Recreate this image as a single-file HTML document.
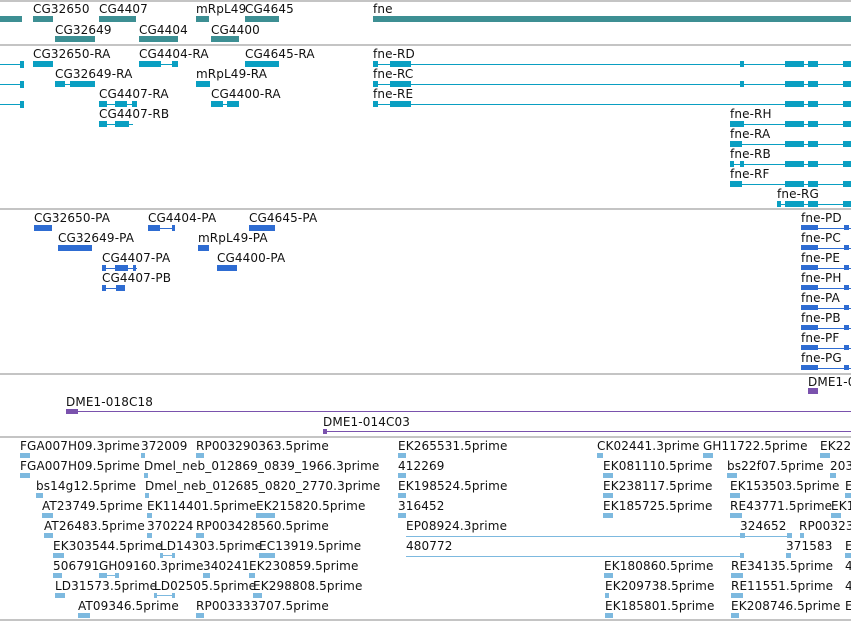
<!DOCTYPE html>
<html><head><meta charset="utf-8"><style>
body{margin:0;width:851px;height:621px;overflow:hidden;background:#fff;position:relative}
.t{position:absolute;font:12px "DejaVu Sans","Liberation Sans",sans-serif;line-height:12px;white-space:nowrap;color:#111;letter-spacing:0.12px;margin-top:1px}
.b{position:absolute}
.hr{position:absolute;left:0;width:851px;height:2px;background:#c4c4c4}
.g{background:#3d8f93;height:6px}
.r{background:#0a9fc2}
.p{background:#2e6cd2}
.u{background:#7a52ad}
.e{background:#7db9df}
</style></head><body>
<div class="hr" style="top:0"></div>
<div class="hr" style="top:44px"></div>
<div class="hr" style="top:208px"></div>
<div class="hr" style="top:373px"></div>
<div class="hr" style="top:436px"></div>
<div class="hr" style="top:619px"></div>

<div class="t" style="left:33px;top:2px">CG32650</div>
<div class="t" style="left:99px;top:2px">CG4407</div>
<div class="t" style="left:196px;top:2px">mRpL49</div>
<div class="t" style="left:245px;top:2px">CG4645</div>
<div class="t" style="left:373px;top:2px">fne</div>
<div class="t" style="left:55px;top:23px">CG32649</div>
<div class="t" style="left:139px;top:23px">CG4404</div>
<div class="t" style="left:211px;top:23px">CG4400</div>
<div class="b g" style="left:0;top:16px;width:22px"></div>
<div class="b g" style="left:33px;top:16px;width:20px"></div>
<div class="b g" style="left:99px;top:16px;width:37px"></div>
<div class="b g" style="left:196px;top:16px;width:13px"></div>
<div class="b g" style="left:245px;top:16px;width:34px"></div>
<div class="b g" style="left:373px;top:16px;width:478px"></div>
<div class="b g" style="left:55px;top:36px;width:40px"></div>
<div class="b g" style="left:139px;top:36px;width:39px"></div>
<div class="b g" style="left:211px;top:36px;width:28px"></div>

<div class="t" style="left:33px;top:47px">CG32650-RA</div>
<div class="t" style="left:139px;top:47px">CG4404-RA</div>
<div class="t" style="left:245px;top:47px">CG4645-RA</div>
<div class="t" style="left:373px;top:47px">fne-RD</div>
<div class="t" style="left:55px;top:67px">CG32649-RA</div>
<div class="t" style="left:196px;top:67px">mRpL49-RA</div>
<div class="t" style="left:373px;top:67px">fne-RC</div>
<div class="t" style="left:99px;top:87px">CG4407-RA</div>
<div class="t" style="left:211px;top:87px">CG4400-RA</div>
<div class="t" style="left:373px;top:87px">fne-RE</div>
<div class="t" style="left:99px;top:107px">CG4407-RB</div>
<div class="t" style="left:730px;top:107px">fne-RH</div>
<div class="t" style="left:730px;top:127px">fne-RA</div>
<div class="t" style="left:730px;top:147px">fne-RB</div>
<div class="t" style="left:730px;top:167px">fne-RF</div>
<div class="t" style="left:777px;top:187px">fne-RG</div>

<div class="b r" style="left:0;top:64px;width:24px;height:1px"></div><div class="b r" style="left:20px;top:61px;width:4px;height:7px"></div>
<div class="b r" style="left:0;top:84px;width:24px;height:1px"></div><div class="b r" style="left:20px;top:81px;width:4px;height:7px"></div>
<div class="b r" style="left:0;top:104px;width:24px;height:1px"></div><div class="b r" style="left:20px;top:101px;width:4px;height:7px"></div>
<div class="b r" style="left:33px;top:61px;width:20px;height:6px"></div>
<div class="b r" style="left:139px;top:64px;width:39px;height:1px"></div><div class="b r" style="left:139px;top:61px;width:22px;height:6px"></div><div class="b r" style="left:172px;top:61px;width:6px;height:6px"></div>
<div class="b r" style="left:245px;top:61px;width:34px;height:6px"></div>
<div class="b r" style="left:55px;top:84px;width:40px;height:1px"></div><div class="b r" style="left:55px;top:81px;width:10px;height:6px"></div><div class="b r" style="left:70px;top:81px;width:25px;height:6px"></div>
<div class="b r" style="left:196px;top:81px;width:14px;height:6px"></div>
<div class="b r" style="left:99px;top:104px;width:38px;height:1px"></div><div class="b r" style="left:99px;top:101px;width:8px;height:6px"></div><div class="b r" style="left:115px;top:101px;width:12px;height:6px"></div><div class="b r" style="left:132px;top:101px;width:5px;height:6px"></div>
<div class="b r" style="left:211px;top:104px;width:28px;height:1px"></div><div class="b r" style="left:211px;top:101px;width:12px;height:6px"></div><div class="b r" style="left:227px;top:101px;width:12px;height:6px"></div>
<div class="b r" style="left:99px;top:124px;width:34px;height:1px"></div><div class="b r" style="left:99px;top:121px;width:8px;height:6px"></div><div class="b r" style="left:115px;top:121px;width:14px;height:6px"></div>

<div class="b r" style="left:373px;top:64px;width:478px;height:1px"></div>
<div class="b r" style="left:373px;top:84px;width:478px;height:1px"></div>
<div class="b r" style="left:373px;top:104px;width:478px;height:1px"></div>
<div class="b r" style="left:373px;top:61px;width:5px;height:6px"></div><div class="b r" style="left:390px;top:61px;width:21px;height:6px"></div>
<div class="b r" style="left:373px;top:81px;width:5px;height:6px"></div><div class="b r" style="left:390px;top:81px;width:21px;height:6px"></div>
<div class="b r" style="left:373px;top:101px;width:5px;height:6px"></div><div class="b r" style="left:390px;top:101px;width:21px;height:6px"></div>
<div class="b r" style="left:740px;top:61px;width:4px;height:6px"></div>
<div class="b r" style="left:740px;top:81px;width:4px;height:6px"></div>
<div class="b r" style="left:730px;top:124px;width:121px;height:1px"></div><div class="b r" style="left:730px;top:121px;width:14px;height:6px"></div>
<div class="b r" style="left:730px;top:144px;width:121px;height:1px"></div><div class="b r" style="left:730px;top:141px;width:12px;height:6px"></div>
<div class="b r" style="left:730px;top:164px;width:121px;height:1px"></div><div class="b r" style="left:730px;top:161px;width:4px;height:6px"></div><div class="b r" style="left:740px;top:161px;width:4px;height:6px"></div>
<div class="b r" style="left:730px;top:184px;width:121px;height:1px"></div><div class="b r" style="left:730px;top:181px;width:12px;height:6px"></div>
<div class="b r" style="left:777px;top:204px;width:74px;height:1px"></div><div class="b r" style="left:777px;top:201px;width:4px;height:6px"></div>
<div class="b r" style="left:785px;top:61px;width:19px;height:6px"></div><div class="b r" style="left:808px;top:61px;width:10px;height:6px"></div><div class="b r" style="left:843px;top:61px;width:8px;height:6px"></div>
<div class="b r" style="left:785px;top:81px;width:19px;height:6px"></div><div class="b r" style="left:808px;top:81px;width:10px;height:6px"></div><div class="b r" style="left:843px;top:81px;width:8px;height:6px"></div>
<div class="b r" style="left:785px;top:101px;width:19px;height:6px"></div><div class="b r" style="left:808px;top:101px;width:10px;height:6px"></div><div class="b r" style="left:843px;top:101px;width:8px;height:6px"></div>
<div class="b r" style="left:785px;top:121px;width:19px;height:6px"></div><div class="b r" style="left:808px;top:121px;width:10px;height:6px"></div><div class="b r" style="left:843px;top:121px;width:8px;height:6px"></div>
<div class="b r" style="left:785px;top:141px;width:19px;height:6px"></div><div class="b r" style="left:808px;top:141px;width:10px;height:6px"></div><div class="b r" style="left:843px;top:141px;width:8px;height:6px"></div>
<div class="b r" style="left:785px;top:161px;width:19px;height:6px"></div><div class="b r" style="left:808px;top:161px;width:10px;height:6px"></div><div class="b r" style="left:843px;top:161px;width:8px;height:6px"></div>
<div class="b r" style="left:785px;top:181px;width:19px;height:6px"></div><div class="b r" style="left:808px;top:181px;width:10px;height:6px"></div><div class="b r" style="left:843px;top:181px;width:8px;height:6px"></div>
<div class="b r" style="left:785px;top:201px;width:19px;height:6px"></div><div class="b r" style="left:808px;top:201px;width:10px;height:6px"></div><div class="b r" style="left:843px;top:201px;width:8px;height:6px"></div>

<div class="t" style="left:34px;top:211px">CG32650-PA</div>
<div class="t" style="left:148px;top:211px">CG4404-PA</div>
<div class="t" style="left:249px;top:211px">CG4645-PA</div>
<div class="t" style="left:58px;top:231px">CG32649-PA</div>
<div class="t" style="left:198px;top:231px">mRpL49-PA</div>
<div class="t" style="left:102px;top:251px">CG4407-PA</div>
<div class="t" style="left:217px;top:251px">CG4400-PA</div>
<div class="t" style="left:102px;top:271px">CG4407-PB</div>
<div class="b p" style="left:34px;top:225px;width:18px;height:6px"></div>
<div class="b p" style="left:148px;top:228px;width:27px;height:1px"></div><div class="b p" style="left:148px;top:225px;width:12px;height:6px"></div><div class="b p" style="left:172px;top:225px;width:3px;height:6px"></div>
<div class="b p" style="left:249px;top:225px;width:26px;height:6px"></div>
<div class="b p" style="left:58px;top:245px;width:34px;height:6px"></div>
<div class="b p" style="left:198px;top:245px;width:11px;height:6px"></div>
<div class="b p" style="left:102px;top:268px;width:35px;height:1px"></div><div class="b p" style="left:102px;top:265px;width:4px;height:6px"></div><div class="b p" style="left:115px;top:265px;width:13px;height:6px"></div><div class="b p" style="left:133px;top:265px;width:3px;height:6px"></div>
<div class="b p" style="left:217px;top:265px;width:20px;height:6px"></div>
<div class="b p" style="left:102px;top:288px;width:23px;height:1px"></div><div class="b p" style="left:102px;top:285px;width:4px;height:6px"></div><div class="b p" style="left:116px;top:285px;width:9px;height:6px"></div>
<div class="t" style="left:801px;top:211px">fne-PD</div>
<div class="t" style="left:801px;top:231px">fne-PC</div>
<div class="t" style="left:801px;top:251px">fne-PE</div>
<div class="t" style="left:801px;top:271px">fne-PH</div>
<div class="t" style="left:801px;top:291px">fne-PA</div>
<div class="t" style="left:801px;top:311px">fne-PB</div>
<div class="t" style="left:801px;top:331px">fne-PF</div>
<div class="t" style="left:801px;top:351px">fne-PG</div>
<div class="b p" style="left:801px;top:228px;width:50px;height:1px"></div><div class="b p" style="left:801px;top:225px;width:17px;height:5px"></div><div class="b p" style="left:844px;top:225px;width:5px;height:5px"></div>
<div class="b p" style="left:801px;top:248px;width:50px;height:1px"></div><div class="b p" style="left:801px;top:245px;width:17px;height:5px"></div><div class="b p" style="left:844px;top:245px;width:5px;height:5px"></div>
<div class="b p" style="left:801px;top:268px;width:50px;height:1px"></div><div class="b p" style="left:801px;top:265px;width:17px;height:5px"></div><div class="b p" style="left:844px;top:265px;width:5px;height:5px"></div>
<div class="b p" style="left:801px;top:288px;width:50px;height:1px"></div><div class="b p" style="left:801px;top:285px;width:17px;height:5px"></div><div class="b p" style="left:844px;top:285px;width:5px;height:5px"></div>
<div class="b p" style="left:801px;top:308px;width:50px;height:1px"></div><div class="b p" style="left:801px;top:305px;width:17px;height:5px"></div><div class="b p" style="left:844px;top:305px;width:5px;height:5px"></div>
<div class="b p" style="left:801px;top:328px;width:50px;height:1px"></div><div class="b p" style="left:801px;top:325px;width:17px;height:5px"></div><div class="b p" style="left:844px;top:325px;width:5px;height:5px"></div>
<div class="b p" style="left:801px;top:348px;width:50px;height:1px"></div><div class="b p" style="left:801px;top:345px;width:17px;height:5px"></div><div class="b p" style="left:844px;top:345px;width:5px;height:5px"></div>
<div class="b p" style="left:801px;top:368px;width:50px;height:1px"></div><div class="b p" style="left:801px;top:365px;width:17px;height:5px"></div><div class="b p" style="left:844px;top:365px;width:5px;height:5px"></div>

<div class="t" style="left:808px;top:375px">DME1-0</div>
<div class="b u" style="left:808px;top:388px;width:10px;height:6px"></div>
<div class="t" style="left:66px;top:395px">DME1-018C18</div>
<div class="b u" style="left:66px;top:409px;width:12px;height:5px"></div>
<div class="b u" style="left:66px;top:411px;width:785px;height:1px"></div>
<div class="t" style="left:323px;top:415px">DME1-014C03</div>
<div class="b u" style="left:323px;top:429px;width:4px;height:5px"></div>
<div class="b u" style="left:323px;top:431px;width:528px;height:1px"></div>

<div class="t" style="left:20px;top:439px">FGA007H09.3prime</div><div class="b e" style="left:20px;top:453px;width:10px;height:5px"></div>
<div class="t" style="left:141px;top:439px">372009</div><div class="b e" style="left:141px;top:453px;width:4px;height:5px"></div>
<div class="t" style="left:196px;top:439px">RP003290363.5prime</div><div class="b e" style="left:196px;top:453px;width:8px;height:5px"></div>
<div class="t" style="left:398px;top:439px">EK265531.5prime</div><div class="b e" style="left:398px;top:453px;width:8px;height:5px"></div>
<div class="t" style="left:597px;top:439px">CK02441.3prime</div><div class="b e" style="left:597px;top:453px;width:6px;height:5px"></div>
<div class="t" style="left:703px;top:439px">GH11722.5prime</div><div class="b e" style="left:703px;top:453px;width:10px;height:5px"></div>
<div class="t" style="left:820px;top:439px">EK22</div><div class="b e" style="left:820px;top:453px;width:10px;height:5px"></div>

<div class="t" style="left:20px;top:459px">FGA007H09.5prime</div><div class="b e" style="left:20px;top:473px;width:10px;height:5px"></div>
<div class="t" style="left:144px;top:459px">Dmel_neb_012869_0839_1966.3prime</div><div class="b e" style="left:144px;top:473px;width:4px;height:5px"></div>
<div class="t" style="left:398px;top:459px">412269</div><div class="b e" style="left:398px;top:473px;width:8px;height:5px"></div>
<div class="t" style="left:603px;top:459px">EK081110.5prime</div><div class="b e" style="left:603px;top:473px;width:10px;height:5px"></div>
<div class="t" style="left:727px;top:459px">bs22f07.5prime</div><div class="b e" style="left:727px;top:473px;width:10px;height:5px"></div>
<div class="t" style="left:830px;top:459px">203</div><div class="b e" style="left:830px;top:473px;width:6px;height:5px"></div>

<div class="t" style="left:36px;top:479px">bs14g12.5prime</div><div class="b e" style="left:36px;top:493px;width:7px;height:5px"></div>
<div class="t" style="left:145px;top:479px">Dmel_neb_012685_0820_2770.3prime</div><div class="b e" style="left:145px;top:493px;width:4px;height:5px"></div>
<div class="t" style="left:398px;top:479px">EK198524.5prime</div><div class="b e" style="left:398px;top:493px;width:8px;height:5px"></div>
<div class="t" style="left:603px;top:479px">EK238117.5prime</div><div class="b e" style="left:603px;top:493px;width:10px;height:5px"></div>
<div class="t" style="left:730px;top:479px">EK153503.5prime</div><div class="b e" style="left:730px;top:493px;width:10px;height:5px"></div>
<div class="t" style="left:845px;top:479px">E</div><div class="b e" style="left:845px;top:493px;width:6px;height:5px"></div>

<div class="t" style="left:42px;top:499px">AT23749.5prime</div><div class="b e" style="left:42px;top:513px;width:11px;height:5px"></div>
<div class="t" style="left:147px;top:499px">EK114401.5prime</div><div class="b e" style="left:147px;top:513px;width:5px;height:5px"></div>
<div class="t" style="left:256px;top:499px">EK215820.5prime</div><div class="b e" style="left:256px;top:513px;width:19px;height:5px"></div>
<div class="t" style="left:398px;top:499px">316452</div><div class="b e" style="left:398px;top:513px;width:8px;height:5px"></div>
<div class="t" style="left:603px;top:499px">EK185725.5prime</div><div class="b e" style="left:603px;top:513px;width:10px;height:5px"></div>
<div class="t" style="left:730px;top:499px">RE43771.5prime</div><div class="b e" style="left:730px;top:513px;width:12px;height:5px"></div>
<div class="t" style="left:831px;top:499px">EK1</div><div class="b e" style="left:831px;top:513px;width:10px;height:5px"></div>

<div class="t" style="left:44px;top:519px">AT26483.5prime</div><div class="b e" style="left:44px;top:533px;width:9px;height:5px"></div>
<div class="t" style="left:147px;top:519px">370224</div><div class="b e" style="left:147px;top:533px;width:5px;height:5px"></div>
<div class="t" style="left:196px;top:519px">RP003428560.5prime</div><div class="b e" style="left:196px;top:533px;width:8px;height:5px"></div>
<div class="t" style="left:406px;top:519px">EP08924.3prime</div><div class="b e" style="left:406px;top:536px;width:386px;height:1px"></div><div class="b e" style="left:740px;top:533px;width:5px;height:5px"></div><div class="b e" style="left:787px;top:533px;width:5px;height:5px"></div>
<div class="t" style="left:740px;top:519px">324652</div>
<div class="t" style="left:799px;top:519px">RP00323</div><div class="b e" style="left:800px;top:533px;width:4px;height:5px"></div>

<div class="t" style="left:53px;top:539px">EK303544.5prime</div><div class="b e" style="left:53px;top:553px;width:11px;height:5px"></div>
<div class="t" style="left:160px;top:539px">LD14303.5prime</div><div class="b e" style="left:160px;top:555px;width:15px;height:1px"></div><div class="b e" style="left:160px;top:553px;width:3px;height:5px"></div><div class="b e" style="left:172px;top:553px;width:3px;height:5px"></div>
<div class="t" style="left:259px;top:539px">EC13919.5prime</div><div class="b e" style="left:259px;top:553px;width:16px;height:5px"></div>
<div class="t" style="left:406px;top:539px">480772</div><div class="b e" style="left:406px;top:556px;width:337px;height:1px"></div><div class="b e" style="left:740px;top:553px;width:4px;height:5px"></div>
<div class="t" style="left:786px;top:539px">371583</div><div class="b e" style="left:786px;top:553px;width:5px;height:5px"></div>
<div class="t" style="left:845px;top:539px">E</div><div class="b e" style="left:845px;top:553px;width:6px;height:5px"></div>

<div class="t" style="left:53px;top:559px">506791</div><div class="b e" style="left:53px;top:573px;width:9px;height:5px"></div>
<div class="t" style="left:99px;top:559px">GH09160.3prime</div><div class="b e" style="left:99px;top:575px;width:20px;height:1px"></div><div class="b e" style="left:99px;top:573px;width:8px;height:5px"></div><div class="b e" style="left:115px;top:573px;width:4px;height:5px"></div>
<div class="t" style="left:203px;top:559px">340241</div><div class="b e" style="left:203px;top:573px;width:7px;height:5px"></div>
<div class="t" style="left:249px;top:559px">EK230859.5prime</div><div class="b e" style="left:249px;top:573px;width:6px;height:5px"></div>
<div class="t" style="left:604px;top:559px">EK180860.5prime</div><div class="b e" style="left:604px;top:573px;width:9px;height:5px"></div>
<div class="t" style="left:731px;top:559px">RE34135.5prime</div><div class="b e" style="left:731px;top:573px;width:12px;height:5px"></div>
<div class="t" style="left:845px;top:559px">4</div>

<div class="t" style="left:55px;top:579px">LD31573.5prime</div><div class="b e" style="left:55px;top:593px;width:10px;height:5px"></div>
<div class="t" style="left:154px;top:579px">LD02505.5prime</div><div class="b e" style="left:154px;top:595px;width:21px;height:1px"></div><div class="b e" style="left:154px;top:593px;width:3px;height:5px"></div><div class="b e" style="left:172px;top:593px;width:3px;height:5px"></div>
<div class="t" style="left:253px;top:579px">EK298808.5prime</div><div class="b e" style="left:253px;top:593px;width:9px;height:5px"></div>
<div class="t" style="left:605px;top:579px">EK209738.5prime</div><div class="b e" style="left:605px;top:593px;width:4px;height:5px"></div>
<div class="t" style="left:731px;top:579px">RE11551.5prime</div><div class="b e" style="left:731px;top:593px;width:12px;height:5px"></div>
<div class="t" style="left:845px;top:579px">4</div>

<div class="t" style="left:78px;top:599px">AT09346.5prime</div><div class="b e" style="left:78px;top:613px;width:12px;height:5px"></div>
<div class="t" style="left:196px;top:599px">RP003333707.5prime</div><div class="b e" style="left:196px;top:613px;width:8px;height:5px"></div>
<div class="t" style="left:605px;top:599px">EK185801.5prime</div><div class="b e" style="left:605px;top:613px;width:8px;height:5px"></div>
<div class="t" style="left:731px;top:599px">EK208746.5prime</div><div class="b e" style="left:731px;top:613px;width:8px;height:5px"></div>
<div class="t" style="left:845px;top:599px">E</div>
</body></html>
